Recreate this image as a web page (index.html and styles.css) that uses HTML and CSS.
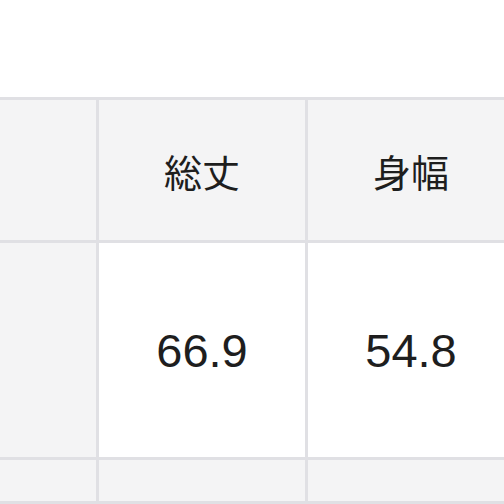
FILE: index.html
```html
<!DOCTYPE html>
<html lang="ja">
<head>
<meta charset="utf-8">
<link rel="stylesheet" href="styles.css">
</head>
<body>
<div class="page">
  <table class="size-table">
    <colgroup>
      <col class="c-label">
      <col class="c-val">
      <col class="c-val">
    </colgroup>
    <tr class="head">
      <th class="label"></th>
      <th>総丈</th>
      <th>身幅</th>
    </tr>
    <tr class="data">
      <th class="label"></th>
      <td>66.9</td>
      <td>54.8</td>
    </tr>
    <tr class="next">
      <th class="label"></th>
      <td></td>
      <td></td>
    </tr>
  </table>
</div>
</body>
</html>
```
FILE: styles.css
```css
html, body {
  margin: 0;
  padding: 0;
  background: #ffffff;
  overflow: hidden;
  width: 504px;
  height: 504px;
}
.page {
  padding-top: 97px;
}
.size-table {
  margin-left: -3px;
  border-collapse: separate;
  border-spacing: 3px;
  background: #e0e0e4;
  table-layout: fixed;
  width: 520px;
}
.c-label { width: 96px; }
.c-val { width: 206px; }
.size-table th,
.size-table td {
  padding: 0;
  text-align: center;
  vertical-align: middle;
  color: #1e1e1e;
  font-weight: normal;
}
.head th {
  height: 140px;
  background: #f4f4f5;
  font-family: "Noto Sans CJK JP", "Noto Sans", sans-serif;
  font-size: 38px;
}
.data td {
  height: 214px;
  background: #ffffff;
  font-family: "Liberation Sans", Arial, sans-serif;
  font-size: 47px;
}
.data th.label {
  background: #f4f4f5;
}
.next th,
.next td {
  height: 41px;
  background: #f4f4f5;
}
```
